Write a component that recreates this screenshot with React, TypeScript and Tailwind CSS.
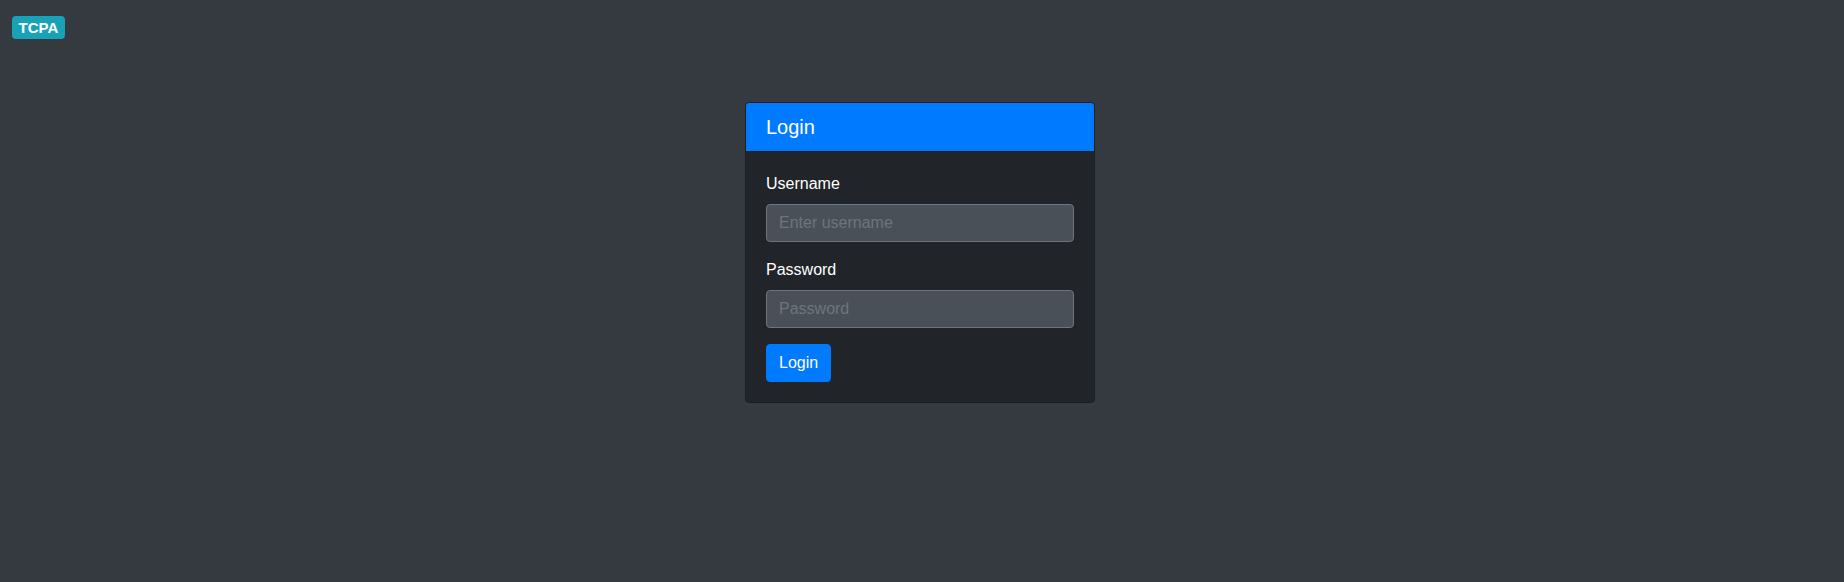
const App = () => (
  <div
    className="min-h-screen bg-[#343a40] text-white"
    style={{ fontFamily: '"Liberation Sans", Arial, sans-serif' }}
  >
    <div className="px-3 pt-4">
      <span className="inline-flex h-[23px] items-center rounded-[4px] bg-[#17a2b8] px-[6.5px] text-[15px] font-bold leading-none text-white">
        TCPA
      </span>
    </div>
    <div className="mt-[62px] flex justify-center pr-[4px]">
      <div className="w-[350px] overflow-hidden rounded-[4px] border border-[#1b1e21] bg-[#212529]">
        <div className="border-b border-[#1b1e21] bg-[#007bff] px-5 py-3">
          <h5 className="text-[20px] leading-[24px] font-normal">Login</h5>
        </div>
        <form className="p-5" onSubmit={(e) => e.preventDefault()}>
          <div className="mb-4">
            <label className="mb-2 block text-base leading-6">Username</label>
            <input
              type="text"
              placeholder="Enter username"
              className="block h-[38px] w-full rounded-[4px] border border-[#6c757d] bg-[#495057] px-3 text-base text-white placeholder:text-[#6c757d] outline-none"
            />
          </div>
          <div className="mb-4">
            <label className="mb-2 block text-base leading-6">Password</label>
            <input
              type="password"
              placeholder="Password"
              className="block h-[38px] w-full rounded-[4px] border border-[#6c757d] bg-[#495057] px-3 text-base text-white placeholder:text-[#6c757d] outline-none"
            />
          </div>
          <button
            type="submit"
            className="h-[38px] rounded-[4px] border border-[#007bff] bg-[#007bff] px-3 text-base leading-6 text-white"
          >
            Login
          </button>
        </form>
      </div>
    </div>
  </div>
);

export default App;
